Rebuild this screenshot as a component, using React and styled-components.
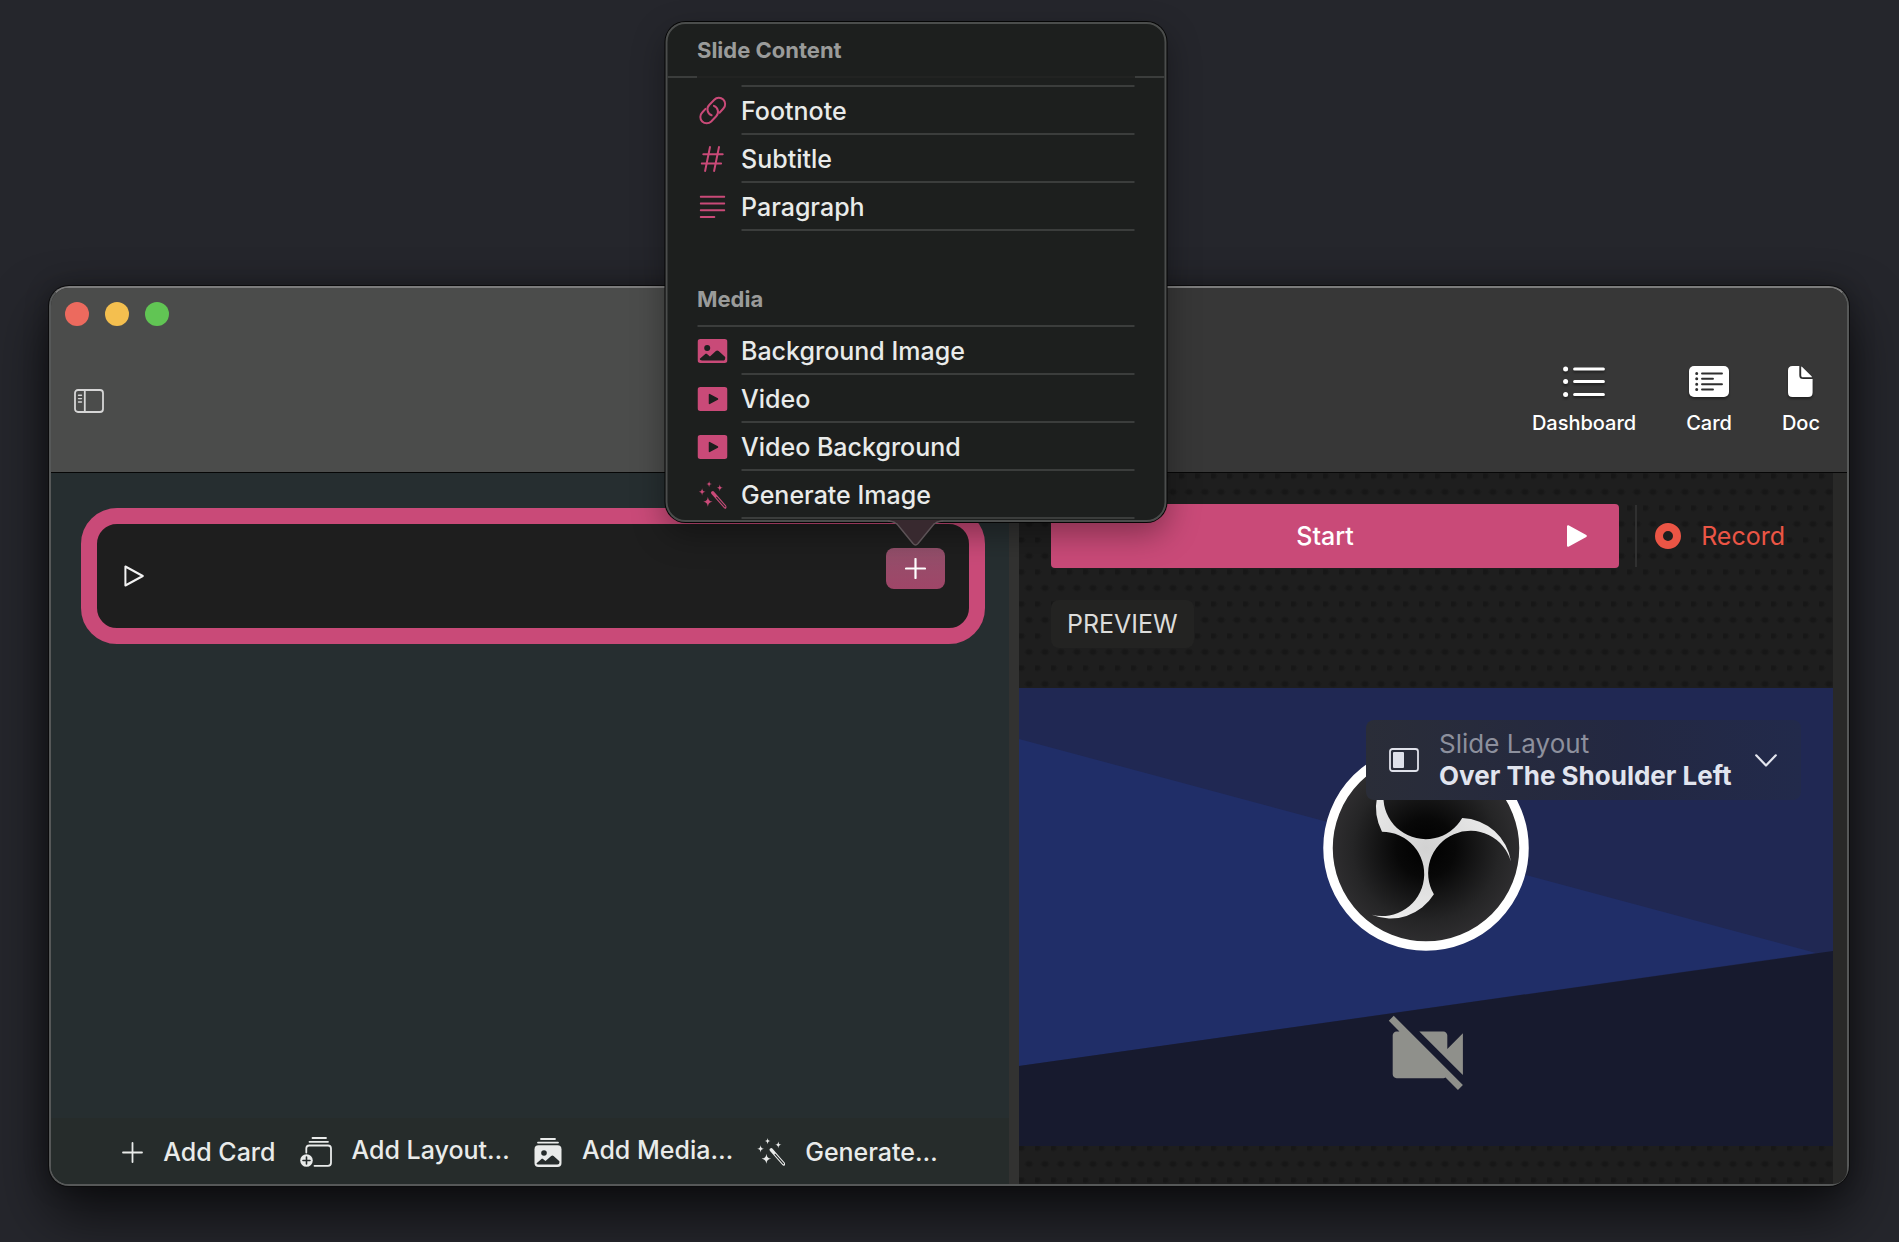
import React from 'react'
import styled, { createGlobalStyle } from 'styled-components';


const GlobalStyle = createGlobalStyle`
  * {
    box-sizing: border-box;
  }
  body {
    margin: 0;
    background-color: #25262c;
    color: #e9ebea;
    font-family: Inter, "Liberation Sans", sans-serif;
    font-size: 25px;
    line-height: 32px;
  }
  button {
    margin: 0;
    padding: 0;
    border: none;
    background: none;
    color: inherit;
    font: inherit;
    cursor: pointer;
  }
  h2 {
    margin: 0;
  }
  svg {
    display: block;
    flex: none;
  }
`;

const SidebarIcon = () => (
  <svg width="30" height="24" viewBox="0 0 30 24" fill="none" stroke="#d6d6d6" strokeWidth="1.8" strokeLinecap="round">
    <rect x="1" y="1" width="28" height="22" rx="3" />
    <path d="M10.8 1v22" />
    <path d="M4.5 6.2h3M4.5 9.6h3M4.5 13h3" strokeWidth="1.4" />
  </svg>
)

const DashboardIcon = () => (
  <svg width="42" height="31" viewBox="0 0 42 31" fill="#fff" stroke="#fff" strokeLinecap="round">
    <path d="M11.6 3h28.8M11.6 15.6h28.8M11.6 28.4h28.8" strokeWidth="3" />
    <circle cx="2.6" cy="3" r="2.5" stroke="none" />
    <circle cx="2.6" cy="15.6" r="2.5" stroke="none" />
    <circle cx="2.6" cy="28.4" r="2.5" stroke="none" />
  </svg>
)

const CardIcon = () => (
  <svg width="40" height="31" viewBox="0 0 40 31">
    <rect width="40" height="31" rx="5" fill="#fff" />
    <g stroke="#2f2f2f" strokeWidth="1.9" strokeLinecap="round">
      <path d="M13 7.5h20M13 12.8h11M13 18.2h20M13 23.5h11" />
      <path d="M7.7 7.5h.01M7.7 12.8h.01M7.7 18.2h.01M7.7 23.5h.01" strokeWidth="3" />
    </g>
  </svg>
)

const DocIcon = () => (
  <svg width="25" height="31" viewBox="0 0 25 31" fill="#fff">
    <path d="M4.5 0h6.8v9.3c0 2.600 1.200 3.800 3.800 3.800H24.600v13.400c0 3-1.500 4.500-4.500 4.500H4.500C1.500 31 0 29.500 0 26.500v-22C0 1.500 1.500 0 4.500 0z" />
    <path d="M13.200.4c.8.3 1.300.8 2 1.500l7.600 7.600c.6.6 1 1.100 1.200 1.700h-9c-1.300 0-1.800-.6-1.800-1.800z" />
  </svg>
)

const PlayOutlineIcon = () => (
  <svg width="20" height="22" viewBox="0 0 20 22" fill="none" stroke="#f2f2f2" strokeWidth="2" strokeLinejoin="round">
    <path d="M1.400 1.500v19L18.800 11z" />
  </svg>
)

const PlayIcon = () => (
  <svg width="20" height="22" viewBox="0 0 20 22" fill="#fff" stroke="#fff" strokeWidth="2" strokeLinejoin="round">
    <path d="M1 1.200v19.600L18.800 11z" />
  </svg>
)

const PlusIcon = ({ weight }) => (
  <svg width="21" height="21" viewBox="0 0 21 21" stroke="currentColor" strokeWidth={weight} strokeLinecap="round">
    <path d="M10.500 1v19M1 10.500h19" />
  </svg>
)

const LinkIcon = () => (
  <svg width="28" height="30" viewBox="0 0 28 30" fill="none" stroke="currentColor" strokeWidth="2" strokeLinecap="round">
    <path d="M7 12.900L3.700 16.500a6.300 6.300 0 0 0 9 9l5-5.300a6.300 6.300 0 0 0-2.300-10.300" />
    <path d="M21 16.700l3.900-4.200a6.300 6.300 0 0 0-9.100-8.800l-5.100 5.300a6.300 6.300 0 0 0 2.400 10.300" />
  </svg>
)

const HashIcon = () => (
  <svg width="24" height="28" viewBox="0 0 24 28" fill="none" stroke="currentColor" strokeWidth="2" strokeLinecap="round">
    <path d="M9.500 2L4.600 26M18.500 2l-4.900 24M2.800 9.300h19.400M1.200 18.500h19.400" />
  </svg>
)

const ParagraphIcon = () => (
  <svg width="26" height="24" viewBox="0 0 26 24" fill="none" stroke="currentColor" strokeWidth="2" strokeLinecap="round">
    <path d="M1.200 1.800h23.600M1.200 8.500h23.600M1.200 15.200h23.600M1.200 21.900h13.600" />
  </svg>
)

const PhotoIcon = () => (
  <svg width="30" height="24" viewBox="0 0 30 24">
    <rect width="30" height="24" rx="3" fill="currentColor" />
    <circle cx="9.700" cy="9" r="3" fill="#1d1f1e" />
    <path d="M2.300 19.800l5.200-4.600c.8-.6 1.500-.6 2.300 0l2.600 2.200 6-5.400c.9-.8 1.800-.8 2.700 0l6.600 6v1.200c0 1.500-.8 2.300-2.300 2.300H4.600c-1.500 0-2.300-.6-2.300-1.700z" fill="#1d1f1e" />
  </svg>
)

const VideoIcon = () => (
  <svg width="30" height="24" viewBox="0 0 30 24">
    <rect width="30" height="24" rx="3" fill="currentColor" />
    <path d="M12 7.600v8.800l8-4.400z" fill="#1d1f1e" stroke="#1d1f1e" strokeWidth="1.500" strokeLinejoin="round" />
  </svg>
)

const WandIcon = () => (
  <svg width="28" height="28" viewBox="0 0 28 28" fill="currentColor">
    <path d="M10.600 0c.4 2.300.8 2.700 3 3.100-2.200.4-2.600.8-3 3.100-.4-2.300-.8-2.700-3-3.100 2.200-.4 2.600-.8 3-3.100z" />
    <path d="M21.300 3.400c.4 2.500.9 3 3.200 3.400-2.300.4-2.800.9-3.200 3.400-.4-2.500-.9-3-3.200-3.400 2.300-.4 2.800-.9 3.200-3.400z" />
    <path d="M3.600 7.200c.4 2.600.9 3.100 3.400 3.600-2.500.5-3 1-3.400 3.600-.4-2.600-.9-3.100-3.400-3.600 2.500-.5 3-1 3.400-3.600z" />
    <path d="M9.400 15.800c.7 3.600 1.300 4.300 4.800 5-3.500.7-4.100 1.400-4.800 5-.7-3.600-1.300-4.300-4.800-5 3.500-.7 4.100-1.400 4.800-5z" />
    <path d="M14.300 11.800L26.700 26" stroke="currentColor" strokeWidth="3.400" strokeLinecap="round" />
    <path d="M18.200 16.300l8.200 9.400" stroke="#232827" strokeWidth="1.200" strokeLinecap="round" />
  </svg>
)

const AddLayoutIcon = () => (
  <svg width="32" height="30" viewBox="0 0 32 30" fill="none" stroke="currentColor" strokeWidth="1.800" strokeLinecap="round">
    <path d="M12.500 1h13.500M9.500 4.800h18.500" />
    <path d="M6.300 15.500v-4c0-2 1-3 3-3h18.700c2 0 3 1 3 3v14.300c0 2-1 3-3 3H14.500" />
    <circle cx="6.500" cy="23.500" r="6.300" fill="currentColor" stroke="none" />
    <path d="M6.500 20v7M3 23.500h7" stroke="#262c2c" strokeWidth="1.600" />
  </svg>
)

const AddMediaIcon = () => (
  <svg width="28" height="29" viewBox="0 0 28 29" fill="none" stroke="currentColor" strokeWidth="1.800" strokeLinecap="round">
    <path d="M7 1h14M4 4.600h20" />
    <rect x=".5" y="7.300" width="27" height="21.700" rx="4" fill="currentColor" stroke="none" />
    <circle cx="10" cy="15" r="2.800" fill="#262c2c" stroke="none" />
    <path d="M2.600 25.200l4.600-4c.7-.6 1.400-.6 2.100 0l2.200 1.800 5.700-5c.8-.7 1.600-.7 2.400 0l5.800 5.200v1.300c0 1.300-.8 2-2.100 2H4.700c-1.300 0-2.100-.3-2.100-1.300z" fill="#262c2c" stroke="none" />
  </svg>
)

const RecordIcon = () => (
  <svg width="26" height="26" viewBox="0 0 26 26" fill="none" stroke="currentColor" strokeWidth="8">
    <circle cx="13" cy="13" r="9" />
  </svg>
)

const LayoutIcon = () => (
  <svg width="30" height="24" viewBox="0 0 30 24">
    <rect x="1" y="1" width="28" height="22" rx="2.500" fill="none" stroke="#dfe1ea" strokeWidth="1.800" />
    <rect x="4" y="4" width="11" height="16" rx="1" fill="#dfe1ea" />
  </svg>
)

const ChevronIcon = () => (
  <svg width="22" height="13" viewBox="0 0 22 13" fill="none" stroke="#e3e5ee" strokeWidth="2.200" strokeLinecap="round" strokeLinejoin="round">
    <path d="M1.200 1.300L11 11.500l9.800-10.200" />
  </svg>
)

const PreviewScene = () => (
  <svg width="100%" viewBox="0 0 814 458" role="img" aria-label="Camera preview">
    <defs>
      <radialGradient id="lens">
        <stop offset="0" stopColor="#000" />
        <stop offset=".3" stopColor="#080808" />
        <stop offset=".75" stopColor="#252526" />
        <stop offset="1" stopColor="#302f31" />
      </radialGradient>
      <radialGradient id="blade" gradientUnits="userSpaceOnUse" cx="0" cy="0" r="86">
        <stop offset="0" stopColor="#d2d2d2" />
        <stop offset="1" stopColor="#efefef" />
      </radialGradient>
    </defs>
    <rect width="814" height="458" fill="#202853" />
    <path d="M0 51L797 265 0 378z" fill="#202e68" />
    <path d="M0 378L814 263v195H0z" fill="#171a2e" />
    <g transform="translate(407 160)">
      <circle r="98" fill="url(#lens)" stroke="#fff" strokeWidth="9.500" />
      <path
        d="M36.200-30A51 51 0 0 1 85 13.700A42.200 42.200 0 1 0 7.900 46.300A51 51 0 0 1-54.400 66.800A42.200 42.200 0 1 0-44-16.300A51 51 0 0 1-30.600-80.500A42.200 42.200 0 1 0 36.200-30z"
        fill="url(#blade)"
      />
    </g>
    <path
      transform="translate(362 320) scale(3.900)"
      fill="#8f908b"
      d="M21 6.500l-4 4V7c0-.55-.45-1-1-1H9.820L21 17.180V6.500zM3.270 2L2 3.270 4.730 6H4c-.55 0-1 .45-1 1v10c0 .55.45 1 1 1h12c.21 0 .39-.08.54-.18L19.730 21 21 19.730 3.270 2z"
    />
  </svg>
)

const tools = [
  { name: 'Dashboard', icon: <DashboardIcon /> },
  { name: 'Card', icon: <CardIcon /> },
  { name: 'Doc', icon: <DocIcon /> },
];

const slideItems = [
  { name: 'Footnote', icon: <LinkIcon /> },
  { name: 'Subtitle', icon: <HashIcon /> },
  { name: 'Paragraph', icon: <ParagraphIcon /> },
];

const mediaItems = [
  { name: 'Background Image', icon: <PhotoIcon /> },
  { name: 'Video', icon: <VideoIcon /> },
  { name: 'Video Background', icon: <VideoIcon /> },
  { name: 'Generate Image', icon: <WandIcon /> },
];

const actions = [
  { name: 'Add Card', icon: <PlusIcon weight="1.800" /> },
  { name: 'Add Layout…', icon: <AddLayoutIcon />, menu: true },
  { name: 'Add Media…', icon: <AddMediaIcon />, menu: true },
  { name: 'Generate…', icon: <WandIcon /> },
];

const MenuRows = ({ items }) => {
  return items.map((currEle)=>{
    return(
      <MenuRow key={currEle.name} type="button">
        <span className='menu-icon'>{currEle.icon}</span>
        <span className='menu-label'>{currEle.name}</span>
      </MenuRow>
    )
  })
}

const ContentPopover = () => (
  <Popover>
    <PopoverHeader>
      <PopoverTitle>Slide Content</PopoverTitle>
    </PopoverHeader>
    <MenuList $inset>
      <MenuRows items={slideItems} />
    </MenuList>
    <SectionHeader>
      <PopoverTitle>Media</PopoverTitle>
    </SectionHeader>
    <MenuList>
      <MenuRows items={mediaItems} />
    </MenuList>
    <PopoverArrow width="56" height="26" viewBox="0 0 56 26">
      <path d="M0 0h56c-7 .5-9 2.500-12 6.500L30.500 23.500c-1.800 2-3.200 2-5 0L12 6.500C9 2.500 7 .5 0 0z" fill="#38292f" />
      <path d="M0 1c7 .5 9 2 12 6l13.500 16.500c1.800 2 3.200 2 5 0L44 7c3-4 5-5.500 12-6" fill="none" stroke="#5c5256" strokeWidth="1.500" />
    </PopoverArrow>
  </Popover>
)

const App = () => {
  return (
    <>
      <GlobalStyle />
      <Desktop>
        <Window>
          <TitleBar>
            <TrafficLights>
              <Light type="button" aria-label="Close" $color="#ec6a5e" />
              <Light type="button" aria-label="Minimize" $color="#f4bf4f" />
              <Light type="button" aria-label="Zoom" $color="#61c554" />
            </TrafficLights>
            <Toolbar>
              <button type="button" aria-label="Toggle sidebar"><SidebarIcon /></button>
              <ToolGroup>
                {
                  tools.map((currEle)=>{
                    return(
                      <ToolButton key={currEle.name} type="button">
                        {currEle.icon}
                        {currEle.name}
                      </ToolButton>
                    )
                  })
                }
              </ToolGroup>
            </Toolbar>
          </TitleBar>
          <Panes>
            <Editor>
              <CardList>
                <SlideCard>
                  <button type="button" aria-label="Play card"><PlayOutlineIcon /></button>
                  <AddContent>
                    <AddButton type="button" aria-label="Add content"><PlusIcon weight="2.200" /></AddButton>
                    <ContentPopover />
                  </AddContent>
                </SlideCard>
              </CardList>
              <ActionBar>
                {
                  actions.map((currEle)=>{
                    return(
                      <ActionButton key={currEle.name} type="button" $menu={currEle.menu}>
                        {currEle.icon}
                        <span>{currEle.name}</span>
                      </ActionButton>
                    )
                  })
                }
              </ActionBar>
            </Editor>
            <Splitter />
            <Stage>
              <Controls>
                <StartButton type="button">
                  <span>Start</span>
                  <PlayIcon />
                </StartButton>
                <ControlDivider />
                <RecordButton type="button">
                  <RecordIcon />
                  Record
                </RecordButton>
              </Controls>
              <Badge>PREVIEW</Badge>
              <Preview>
                <PreviewScene />
                <LayoutPicker type="button">
                  <LayoutIcon />
                  <span className='layout-text'>
                    <span>Slide Layout</span>
                    <strong>Over The Shoulder Left</strong>
                  </span>
                  <ChevronIcon />
                </LayoutPicker>
              </Preview>
            </Stage>
            <ScrollTrack />
          </Panes>
        </Window>
      </Desktop>
    </>
  )
}


const Desktop = styled.main`
  display: flex;
  flex-direction: column;
  min-height: 100vh;
  padding: 286px 50px 56px 49px;
`;

const Window = styled.section`
  flex: 1;
  display: flex;
  flex-direction: column;
  border: 2px solid #565858;
  border-top-color: #7c7c7c;
  border-radius: 20px;
  background-color: #292928;
  box-shadow: 0 0 0 1px #0b0b0c, 0 28px 56px rgba(0, 0, 0, 0.65), 0 0 24px rgba(0, 0, 0, 0.3);
`;

const TitleBar = styled.header`
  padding: 14px 27px 37px 14px;
  border-bottom: 1px solid #060606;
  border-radius: 18px 18px 0 0;
  background: linear-gradient(90deg, #4b4c4b 38%, #373737 58%);
`;

const TrafficLights = styled.div`
  display: flex;
  gap: 16px;
`;

const Light = styled.button`
  width: 24px;
  height: 24px;
  border-radius: 50%;
  background-color: ${({ $color }) => $color};
`;

const Toolbar = styled.nav`
  display: flex;
  align-items: center;
  justify-content: space-between;
  margin-top: 40px;
  padding-left: 9px;
`;

const ToolGroup = styled.div`
  display: flex;
  gap: 50px;
`;

const ToolButton = styled.button`
  display: flex;
  flex-direction: column;
  align-items: center;
  gap: 14px;
  color: #fff;
  font-size: 20px;
  font-weight: 500;
  line-height: 24px;
  svg {
    filter: drop-shadow(0 2px 1px rgba(0, 0, 0, 0.4));
  }
`;

const Panes = styled.div`
  flex: 1;
  display: grid;
  grid-template-columns: 958fr 10px 814fr 14px;
`;

const Editor = styled.section`
  display: flex;
  flex-direction: column;
  border-radius: 0 0 0 18px;
  background-color: #262e30;
`;

const CardList = styled.div`
  flex: 1;
  padding: 35px 24px 0 30px;
`;

const SlideCard = styled.article`
  display: flex;
  justify-content: space-between;
  height: 136px;
  padding: 24px 24px 24px 27px;
  border: 16px solid #c94a78;
  border-radius: 36px;
  background-color: #1e1e1e;
`;

const AddContent = styled.div`
  position: relative;
  align-self: flex-start;
`;

const AddButton = styled.button`
  display: flex;
  align-items: center;
  justify-content: center;
  width: 59px;
  height: 41px;
  border-radius: 8px;
  background: linear-gradient(#93506b, #9f4668);
  color: #fff;
`;

const Popover = styled.div`
  position: absolute;
  z-index: 2;
  bottom: calc(100% + 26px);
  left: 50%;
  width: 501px;
  height: 500px;
  transform: translateX(-50%);
  border: 2px solid #4b4d4c;
  border-radius: 20px;
  background-color: #1d1f1e;
  box-shadow: 0 0 0 1px #050505, 0 12px 32px rgba(0, 0, 0, 0.35);
`;

const PopoverHeader = styled.div`
  padding: 10px 30px;
  border-bottom: 2px solid;
  border-image: linear-gradient(90deg, #3b3d3c 30px, #222322 30px, #222322 calc(100% - 30px), #3b3d3c calc(100% - 30px)) 1;
`;

const PopoverTitle = styled.h2`
  color: #9a9b9a;
  font-size: 22px;
  font-weight: 700;
  line-height: 32px;
`;

const MenuList = styled.div`
  display: flex;
  flex-direction: column;
  padding: 0 30px;
  ${({ $inset }) => $inset && `
    padding-top: 7px;
    &::before {
      content: "";
      height: 2px;
      margin-left: 44px;
      background-color: #3b3d3c;
    }
  `}
`;

const SectionHeader = styled.div`
  margin: 0 30px;
  padding: 52px 0 10px;
  border-bottom: 2px solid #3b3d3c;
`;

const MenuRow = styled.button`
  display: flex;
  height: 48px;
  font-weight: 500;
  text-align: left;
  .menu-icon {
    display: flex;
    align-items: center;
    justify-content: center;
    width: 30px;
    height: 48px;
    margin-right: 14px;
    color: #c94a78;
  }
  .menu-label {
    flex: 1;
    height: 48px;
    border-bottom: 2px solid #3b3d3c;
    line-height: 48px;
  }
`;

const PopoverArrow = styled.svg`
  position: absolute;
  top: 100%;
  left: 50%;
  transform: translateX(-50%);
`;

const ActionBar = styled.footer`
  display: flex;
  align-items: center;
  justify-content: center;
  gap: 24px;
  height: 66px;
  padding-top: 2px;
  border-radius: 0 0 0 18px;
  background-color: #262c2b;
`;

const ActionButton = styled.button`
  display: flex;
  align-items: center;
  gap: 20px;
  font-weight: 500;
  span {
    padding-bottom: ${({ $menu }) => $menu ? '4px' : '0'};
  }
`;

const Splitter = styled.div`
  background-color: #323231;
`;

const Stage = styled.section`
  display: flex;
  flex-direction: column;
  align-items: flex-start;
  padding-top: 31px;
  background-color: #1e1e1e;
  background-image:
    radial-gradient(ellipse 5px 4px at 10px 19px, #171717 40%, transparent),
    radial-gradient(ellipse 5px 4px at 2px 3px, #171717 40%, transparent);
  background-size: 16px 32px;
`;

const Controls = styled.div`
  display: flex;
  align-items: center;
  align-self: stretch;
  padding: 0 48px 0 32px;
`;

const StartButton = styled.button`
  flex: 1;
  display: flex;
  align-items: center;
  height: 64px;
  padding: 0 32px;
  border-radius: 4px;
  background-color: #c94a78;
  color: #fff;
  font-weight: 500;
  span {
    flex: 1;
  }
`;

const ControlDivider = styled.div`
  width: 2px;
  height: 62px;
  margin: 0 18px 0 16px;
  background-color: #303030;
`;

const RecordButton = styled.button`
  display: flex;
  align-items: center;
  gap: 20px;
  color: #eb5545;
`;

const Badge = styled.div`
  margin: 32px 0 40px 32px;
  padding: 8px 16px;
  border-radius: 8px;
  background-color: #232322;
  color: #dcdcda;
`;

const Preview = styled.div`
  position: relative;
  width: 100%;
`;

const LayoutPicker = styled.button`
  position: absolute;
  top: 32px;
  right: 32px;
  display: flex;
  align-items: center;
  gap: 20px;
  min-width: 435px;
  height: 80px;
  padding: 0 24px 0 23px;
  border-radius: 8px;
  background: linear-gradient(90deg, #2a2d38, #232842 60%, #222a4b);
  font-size: 26px;
  text-align: left;
  .layout-text {
    flex: 1;
    display: flex;
    flex-direction: column;
    color: #8d909d;
  }
  strong {
    color: #e1e4ee;
    font-weight: 700;
  }
`;

const ScrollTrack = styled.div`
  border-radius: 0 0 18px 0;
  background-color: #292928;
`;

export default App
